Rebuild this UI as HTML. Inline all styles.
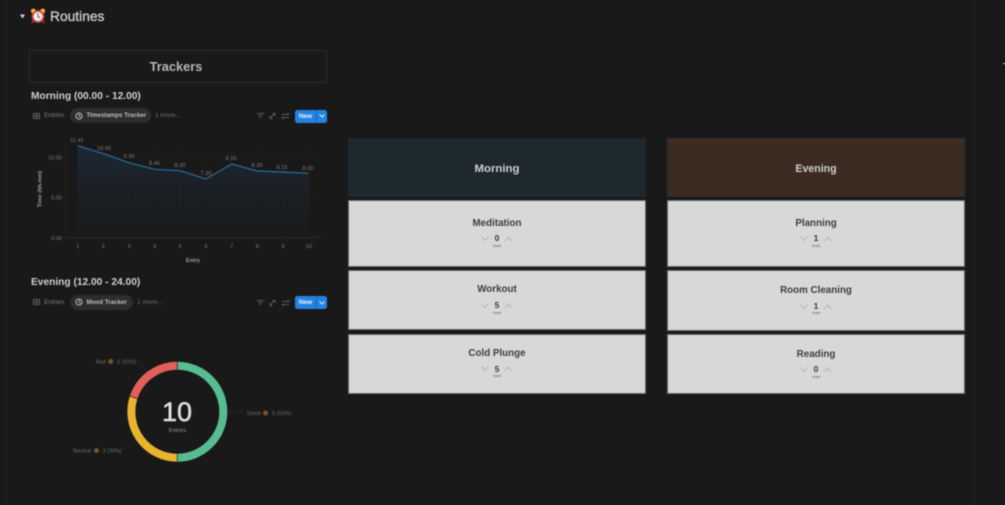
<!DOCTYPE html>
<html><head><meta charset="utf-8">
<style>
html,body{margin:0;padding:0;background:#191919;}
#p{position:relative;width:1005px;height:505px;overflow:hidden;background:#191919;font-family:"Liberation Sans",sans-serif;filter:blur(.4px);}
.a{position:absolute;white-space:nowrap;}
.c{text-align:center;}
.card{position:absolute;background:#d8d8d8;border:1px solid #6a6a6a;box-sizing:border-box;width:298px;}
.hd{position:absolute;width:298px;height:59px;border-radius:2px;color:#d0d0d0;font-size:11.4px;font-weight:bold;text-align:center;line-height:62px;}
.t{position:absolute;left:0;width:100%;text-align:center;font-size:9.8px;font-weight:bold;color:#3d3d3d;}
.n{position:absolute;left:0;width:100%;text-align:center;font-size:8.5px;font-weight:bold;color:#3a3a3a;}
.r{position:absolute;left:0;width:100%;text-align:center;font-size:3.4px;font-weight:bold;color:#777;}
.ch{position:absolute;left:132px;width:32px;height:6px;}
.tab{color:#7d7d7d;font-size:6.5px;}
.pill{position:absolute;height:15px;border-radius:8px;background:#2d2d2d;}
.new{position:absolute;width:32px;height:13px;background:#2383e2;border-radius:2.5px;}
</style></head><body><div id="p">
<div class="a" style="left:6px;top:0;width:1px;height:505px;background:#202020"></div>
<div class="a" style="left:973px;top:0;width:2px;height:505px;background:#202020"></div>
<div class="a" style="left:1003px;top:63px;width:2px;height:1px;background:#bbb"></div>

<svg class="a" style="left:20px;top:14px" width="5" height="5"><path d="M0 .5H5L2.5 4.5Z" fill="#d0d0d0"/></svg>
<svg class="a" style="left:30px;top:8px" width="16" height="16" viewBox="0 0 16 16">
<circle cx="3.3" cy="3" r="2.4" fill="#f2b033"/><circle cx="12.7" cy="3" r="2.4" fill="#f2b033"/>
<path d="M3 13L1.8 15M13 13L14.2 15" stroke="#c43b3b" stroke-width="1.4"/>
<circle cx="8" cy="8.5" r="6.3" fill="#dc4a4a"/><circle cx="8" cy="8.5" r="4.5" fill="#eee"/>
<path d="M8 5.5V8.8L10.3 9.8" stroke="#555" stroke-width="1" fill="none"/></svg>
<div class="a" style="left:50px;top:8.5px;font-size:13.8px;color:#cdcdcd;-webkit-text-stroke:.35px #cdcdcd">Routines</div>

<div class="a" style="left:29px;top:50px;width:298px;height:33px;box-sizing:border-box;border:1px solid #2c2c2c;border-radius:2px"></div>
<div class="a c" style="left:27px;top:58.5px;width:298px;font-size:12.8px;font-weight:bold;color:#b8b8b8">Trackers</div>

<div class="a" style="left:31px;top:91px;font-size:10.2px;font-weight:bold;color:#cfcfcf">Morning (00.00 - 12.00)</div>
<svg class="a" style="left:33px;top:112.5px" width="7" height="6" fill="none" stroke="#5c5c5c"><path d="M.5.5H6.5V5.5H.5ZM.5 3H6.5M3.5.5V5.5"/></svg>
<div class="a tab" style="left:44px;top:112px">Entries</div>
<div class="pill" style="left:70px;top:108px;width:81px"></div>
<svg class="a" style="left:75px;top:111.5px" width="8" height="8" fill="none" stroke="#bbb"><circle cx="4" cy="4" r="3"/><path d="M4 2V4L5.5 5"/></svg>
<div class="a" style="left:86.5px;top:112px;font-size:6.2px;font-weight:bold;color:#bcbcbc">Timestamps Tracker</div>
<div class="a tab" style="left:155px;top:112px;color:#6f6f6f">1 more...</div>

<svg class="a" style="left:256px;top:112px" width="40" height="8" fill="none" stroke="#595959" stroke-width=".9"><path d="M1 1.5H8M2.5 3.5H6.5M3.5 5.5H5.5M14 6L19 1.5M14 4V6.5H16.5M19 4V1.5H16.5M26 2.5H33L31.5 1M33 5.5H26L27.5 7"/></svg>
<div class="new" style="left:295px;top:109.5px"></div>
<div class="a c" style="left:295px;top:112.5px;width:21px;font-size:6.5px;font-weight:bold;color:#e9f2fb">New</div>
<div class="a" style="left:316px;top:109.5px;width:1px;height:13px;background:#1a66b2"></div>
<svg class="a" style="left:319px;top:114px" width="6" height="4" fill="none" stroke="#dcebfa"><path d="M.5.5L3 3L5.5.5"/></svg>

<svg class="a" style="left:30px;top:130px" width="300" height="140" viewBox="30 130 300 140" font-family="Liberation Sans" font-size="5.6" fill="#7c7c7c">
<defs><linearGradient id="g" x1="0" y1="0" x2="0" y2="1"><stop offset="0" stop-color="#1f3346" stop-opacity=".6"/><stop offset="1" stop-color="#1c2024" stop-opacity=".2"/></linearGradient></defs>
<path d="M65 157.3H322M65 197.3H322" stroke="#222" stroke-width=".7" stroke-dasharray="1.5 1.5"/>
<path d="M77.7 146V237.7M103.3 146V237.7M129 146V237.7M154.7 146V237.7M180.3 146V237.7M206 146V237.7M231.7 146V237.7M257.3 146V237.7M283 146V237.7M308.7 146V237.7" stroke="#212121" stroke-width=".6" stroke-dasharray="1.5 1.5"/>
<path d="M77.7 145.7L103.3 153.7L129 162.7L154.7 169.3L180.3 170.7L206 179L231.7 164L257.3 171L283 172L308.7 173.3V237.7H77.7Z" fill="url(#g)"/>
<path d="M77.7 145.7L103.3 153.7L129 162.7L154.7 169.3L180.3 170.7L206 179L231.7 164L257.3 171L283 172L308.7 173.3" fill="none" stroke="#2a6d9e" stroke-width="1.2"/>
<path d="M65 237.7H322" stroke="#2e2e2e" stroke-width=".8"/>
<path d="M65 146V237.7" stroke="#222" stroke-width=".8"/>
<g text-anchor="end"><text x="62" y="159.5">10.00</text><text x="62" y="199.5">5.00</text><text x="62" y="240">0.00</text></g>
<g text-anchor="middle">
<text x="77.7" y="248">1</text><text x="103.3" y="248">2</text><text x="129" y="248">3</text><text x="154.7" y="248">4</text><text x="180.3" y="248">5</text><text x="206" y="248">6</text><text x="231.7" y="248">7</text><text x="257.3" y="248">8</text><text x="283" y="248">9</text><text x="308.7" y="248">10</text>
<text x="77" y="142">11.41</text><text x="104" y="150">10.45</text><text x="129" y="158">9.30</text><text x="154.5" y="165">8.45</text><text x="180" y="167">8.30</text><text x="206" y="175">7.30</text><text x="231" y="160">9.15</text><text x="257" y="167">8.30</text><text x="282" y="169">8.15</text><text x="308" y="170">8.00</text>
<text x="193" y="262" font-weight="bold" fill="#a0a0a0">Entry</text>
<text transform="translate(41.5 189) rotate(-90)" font-weight="bold" fill="#a0a0a0">Time (hh.mm)</text>
</g></svg>

<div class="a" style="left:31px;top:277px;font-size:10.2px;font-weight:bold;color:#cfcfcf">Evening (12.00 - 24.00)</div>
<svg class="a" style="left:33px;top:299px" width="7" height="6" fill="none" stroke="#5c5c5c"><path d="M.5.5H6.5V5.5H.5ZM.5 3H6.5M3.5.5V5.5"/></svg>
<div class="a tab" style="left:44px;top:298.5px">Entries</div>
<div class="pill" style="left:70px;top:294.5px;width:63px"></div>
<svg class="a" style="left:75px;top:298px" width="8" height="8" fill="none" stroke="#bbb"><circle cx="4" cy="4" r="3"/><path d="M4 2V4L5.5 5"/></svg>
<div class="a" style="left:86.5px;top:298.5px;font-size:6.2px;font-weight:bold;color:#bcbcbc">Mood Tracker</div>
<div class="a tab" style="left:137px;top:298.5px;color:#6f6f6f">1 more...</div>
<svg class="a" style="left:256px;top:298.5px" width="40" height="8" fill="none" stroke="#595959" stroke-width=".9"><path d="M1 1.5H8M2.5 3.5H6.5M3.5 5.5H5.5M14 6L19 1.5M14 4V6.5H16.5M19 4V1.5H16.5M26 2.5H33L31.5 1M33 5.5H26L27.5 7"/></svg>
<div class="new" style="left:295px;top:296px"></div>
<div class="a c" style="left:295px;top:299px;width:21px;font-size:6.5px;font-weight:bold;color:#e9f2fb">New</div>
<div class="a" style="left:316px;top:296px;width:1px;height:13px;background:#1a66b2"></div>
<svg class="a" style="left:319px;top:300.5px" width="6" height="4" fill="none" stroke="#dcebfa"><path d="M.5.5L3 3L5.5.5"/></svg>

<svg class="a" style="left:60px;top:345px" width="240" height="125" viewBox="60 345 240 125" font-family="Liberation Sans" font-size="5.5" fill="#6c6c6c">
<path d="M227.5 412H243M138 361L148 372M124 449L135 442" stroke="#2a2a2a" stroke-width=".8" fill="none"/>
<path d="M177.3 365.7A46 46 0 0 1 177.3 457.7" fill="none" stroke="#57bd90" stroke-width="8"/>
<path d="M177.3 457.7A46 46 0 0 1 133.6 397.5" fill="none" stroke="#e8b32e" stroke-width="8"/>
<path d="M133.6 397.5A46 46 0 0 1 177.3 365.7" fill="none" stroke="#e35f5b" stroke-width="8"/>
<path d="M177.3 361.7V369.7M177.3 453.7V461.7M129.8 396.2L137.4 398.7" stroke="#191919" stroke-width=".7"/>
<text x="177" y="421" text-anchor="middle" font-size="27" fill="#dedede" stroke="#dedede" stroke-width=".5">10</text>
<text x="177.5" y="432" text-anchor="middle" font-size="5.6" fill="#969696">Entries</text>
<text x="96" y="363.5">Bad</text><circle cx="110.7" cy="361.5" r="2.5" fill="#7a5429"/><text x="117" y="363.5">2 (20%)</text>
<text x="247" y="415">Good</text><circle cx="265.5" cy="413" r="2.5" fill="#7a5429"/><text x="272" y="415">5 (50%)</text>
<text x="73" y="452.5">Neutral</text><circle cx="96.5" cy="450.5" r="2.5" fill="#7a5429"/><text x="102.5" y="452.5">3 (30%)</text>
</svg>

<div class="hd" style="left:348px;top:138px;background:#1e282f">Morning</div>
<div class="hd" style="left:667px;top:138px;background:#3c2b21;font-size:10.6px">Evening</div>

<div class="card" style="left:348px;top:200px;height:67px"><div class="t" style="top:16.5px">Meditation</div><div class="n" style="top:32px">0</div><div class="r" style="top:42.5px">reset</div><svg class="ch" style="top:35px" fill="none" stroke="#b4b4b4"><path d="M.5.5L4 4.5L7.5.5M24 5L27.5 1L31 5"/></svg></div>
<div class="card" style="left:348px;top:270px;height:60px"><div class="t" style="top:13px">Workout</div><div class="n" style="top:29px">5</div><div class="r" style="top:39.5px">reset</div><svg class="ch" style="top:31.5px" fill="none" stroke="#b4b4b4"><path d="M.5.5L4 4.5L7.5.5M24 5L27.5 1L31 5"/></svg></div>
<div class="card" style="left:348px;top:333.5px;height:60px"><div class="t" style="top:13.5px">Cold Plunge</div><div class="n" style="top:29px">5</div><div class="r" style="top:39.5px">reset</div><svg class="ch" style="top:31.5px" fill="none" stroke="#b4b4b4"><path d="M.5.5L4 4.5L7.5.5M24 5L27.5 1L31 5"/></svg></div>

<div class="card" style="left:667px;top:200px;height:67px"><div class="t" style="top:16.5px">Planning</div><div class="n" style="top:32px">1</div><div class="r" style="top:42.5px">reset</div><svg class="ch" style="top:35px" fill="none" stroke="#b4b4b4"><path d="M.5.5L4 4.5L7.5.5M24 5L27.5 1L31 5"/></svg></div>
<div class="card" style="left:667px;top:270px;height:61px"><div class="t" style="top:13.5px">Room Cleaning</div><div class="n" style="top:29.5px">1</div><div class="r" style="top:40px">reset</div><svg class="ch" style="top:32.5px" fill="none" stroke="#b4b4b4"><path d="M.5.5L4 4.5L7.5.5M24 5L27.5 1L31 5"/></svg></div>
<div class="card" style="left:667px;top:334px;height:60px"><div class="t" style="top:13.5px">Reading</div><div class="n" style="top:29px">0</div><div class="r" style="top:39.5px">reset</div><svg class="ch" style="top:31.5px" fill="none" stroke="#b4b4b4"><path d="M.5.5L4 4.5L7.5.5M24 5L27.5 1L31 5"/></svg></div>
</div></body></html>
